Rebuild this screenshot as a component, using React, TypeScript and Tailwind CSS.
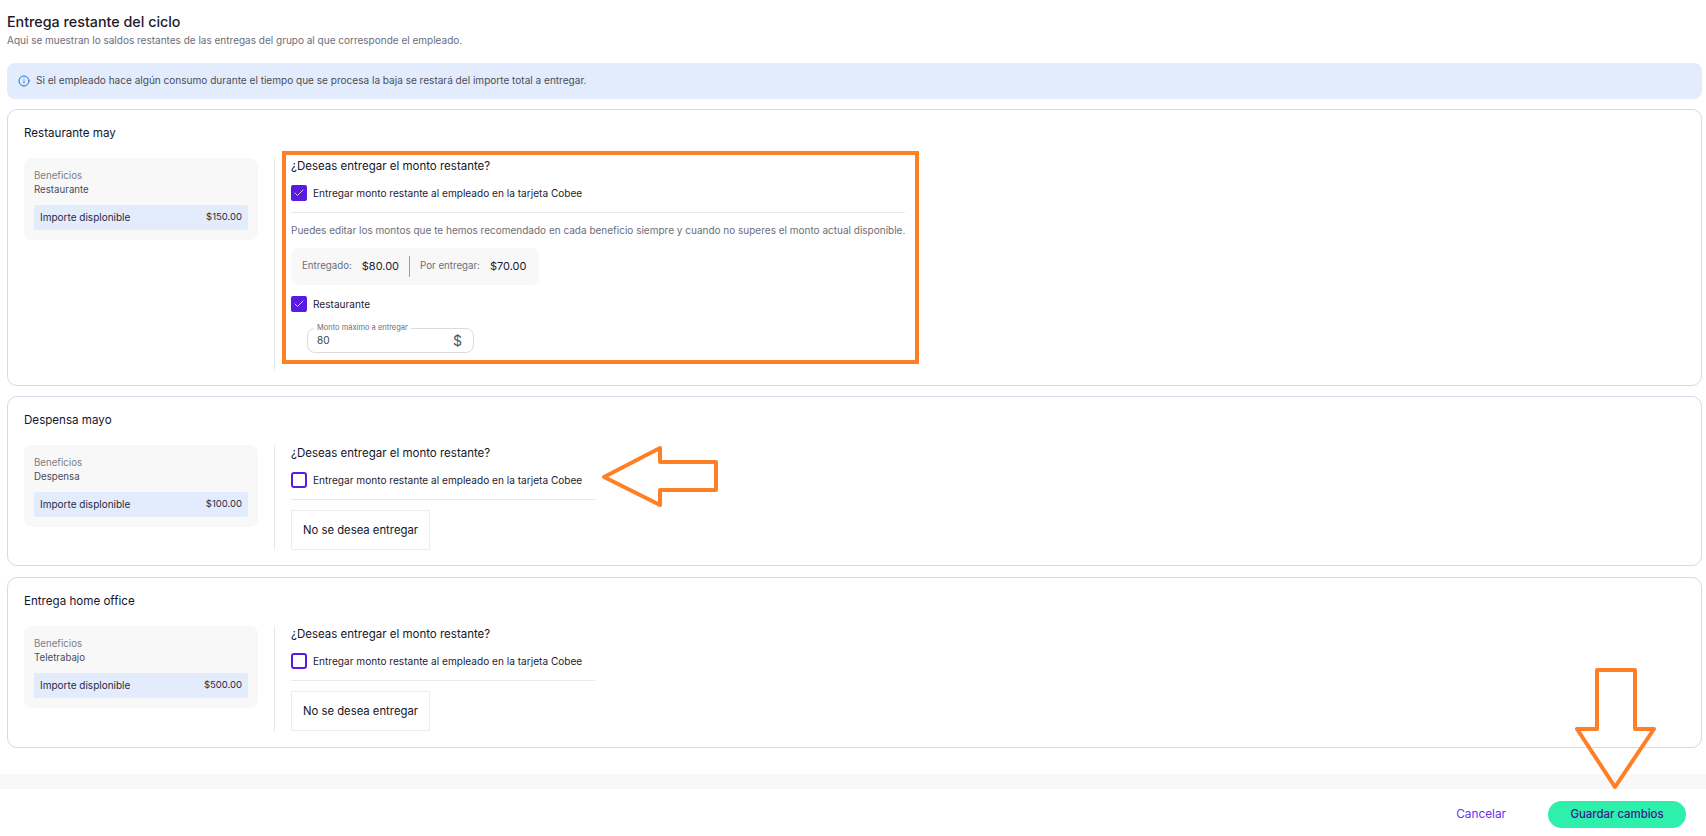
import React, { FC } from 'react';
import { Check, Info } from 'lucide-react';

const font = "font-['Inter','Liberation_Sans',sans-serif]";

const CheckBox: FC<{ checked?: boolean }> = ({ checked }) =>
  checked ? (
    <span className="flex h-4 w-4 shrink-0 items-center justify-center rounded-[2px] bg-[#5a1be0]">
      <Check className="h-3 w-3 text-white" strokeWidth={1.5} />
    </span>
  ) : (
    <span className="h-4 w-4 shrink-0 rounded-[3px] border-2 border-[#5a1be0] bg-white" />
  );

const CheckRow: FC<{ checked?: boolean; label: string }> = ({ checked, label }) => (
  <div className="flex items-center gap-[6px]">
    <CheckBox checked={checked} />
    <span className="text-[10.1px] leading-4 text-[#1f2233]">{label}</span>
  </div>
);

const Summary: FC<{ benefit: string; amount: string }> = ({ benefit, amount }) => (
  <div className="h-fit w-[234px] shrink-0 rounded-lg bg-[#f8f8f8] px-[10px] pt-[11px] pb-[10px]">
    <p className="text-[9.7px] leading-[14px] text-[#7c7f8a]">Beneficios</p>
    <p className="text-[9.7px] leading-[14px] text-[#4a4d5a]">{benefit}</p>
    <div className="mt-2 flex h-[25px] items-center justify-between rounded-[2px] bg-[#e3ecfc] px-[6px]">
      <span className="text-[10px] text-[#1f2a44]">Importe displonible</span>
      <span className="text-[9.5px] text-[#1f2a44]">{amount}</span>
    </div>
  </div>
);

const Question: FC<{ checked?: boolean }> = ({ checked }) => (
  <>
    <p className="text-[11.5px] leading-4 text-[#14162a]">¿Deseas entregar el monto restante?</p>
    <div className="mt-[11px]">
      <CheckRow checked={checked} label="Entregar monto restante al empleado en la tarjeta Cobee" />
    </div>
    <div className="mt-[11px] h-px bg-[#e8e9ed]" />
  </>
);

const Card: FC<{ title: string; benefit: string; amount: string; className?: string; children: React.ReactNode }> = ({
  title,
  benefit,
  amount,
  className,
  children,
}) => (
  <section className={`rounded-[10px] border border-[#d3dbe6] bg-white px-4 pt-[15px] pb-[15px] ${className ?? ''}`}>
    <h3 className="text-[11.6px] leading-4 font-normal text-[#14162a]">{title}</h3>
    <div className="mt-[17px] flex">
      <Summary benefit={benefit} amount={amount} />
      <div className="ml-4 w-px bg-[#e8e9ed]" />
      <div className="pl-4">{children}</div>
    </div>
  </section>
);

const NoDelivery: FC = () => (
  <div className="w-[304px]">
    <Question />
    <div className="mt-[10px] flex h-10 w-[139px] items-center justify-center border border-[#ececef] text-[11.3px] text-[#14162a]">
      No se desea entregar
    </div>
  </div>
);

const Stat: FC<{ label: string; value: string }> = ({ label, value }) => (
  <div className="flex items-center gap-[10px]">
    <span className="text-[9.7px] text-[#6b6e7a]">{label}</span>
    <span className="text-[11px] text-[#1f2233]">{value}</span>
  </div>
);

export default function App() {
  return (
    <div className={`relative flex h-[836px] flex-col overflow-hidden bg-white ${font}`}>
      <div className="pt-3 pr-1 pl-[7px]">
        <h1 className="text-[14.3px] leading-5 font-medium text-[#1a1a2a]">Entrega restante del ciclo</h1>
        <p className="text-[10px] leading-4 text-[#6b6e7a]">
          Aqui se muestran lo saldos restantes de las entregas del grupo al que corresponde el empleado.
        </p>

        <div className="mt-[15px] flex h-9 items-center gap-[6px] rounded-lg bg-[#e3ecfc] pl-[11px]">
          <Info className="h-3 w-3 text-[#1d6fe0]" />
          <span className="text-[10.05px] text-[#4a4d5a]">
            Si el empleado hace algún consumo durante el tiempo que se procesa la baja se restará del importe total a
            entregar.
          </span>
        </div>

        <Card className="mt-[10px]" title="Restaurante may" benefit="Restaurante" amount="$150.00">
          <div className="w-fit pb-px">
            <Question checked />
            <p className="mt-[10px] text-[10px] leading-[14px] text-[#6b6e7a]">
              Puedes editar los montos que te hemos recomendado en cada beneficio siempre y cuando no superes el monto
              actual disponible.
            </p>
            <div className="mt-[11px] flex h-[37px] w-[248px] items-center rounded-lg bg-[#f8f8f8] px-[11px]">
              <Stat label="Entregado:" value="$80.00" />
              <div className="mx-[10px] h-[21px] w-px bg-[#9a9ca6]" />
              <Stat label="Por entregar:" value="$70.00" />
            </div>
            <div className="mt-[11px]">
              <CheckRow checked label="Restaurante" />
            </div>
            <div className="relative mt-4 mb-4 ml-4 flex h-[25px] w-[167px] items-center justify-between rounded-lg border border-[#d9dbe0] pr-[11px] pl-[9px]">
              <span className="absolute -top-[6px] left-[6px] bg-white px-[3px] text-[7.5px] leading-[10px] text-[#6b6e7a]">
                Monto máximo a entregar
              </span>
              <span className="text-[10px] text-[#3a3d4a]">80</span>
              <span className="text-[14px] text-[#4a5568]">$</span>
            </div>
          </div>
        </Card>

        <Card className="mt-[10px]" title="Despensa mayo" benefit="Despensa" amount="$100.00">
          <NoDelivery />
        </Card>

        <Card className="mt-[11px]" title="Entrega home office" benefit="Teletrabajo" amount="$500.00">
          <div className="pb-px">
            <NoDelivery />
          </div>
        </Card>
      </div>

      <div className="mt-[26px] h-[15px] bg-[#f8f8f8]" />

      <footer className="flex items-start justify-end pt-3 pr-5">
        <button className="mr-[42px] h-[27px] text-[11.8px] text-[#6a2ff0]">Cancelar</button>
        <button className="h-[27px] w-[138px] rounded-full bg-[#2ef0ad] text-[11.4px] font-medium text-[#3a1a8c]">
          Guardar cambios
        </button>
      </footer>

      {/* hand drawn annotations on top of the capture */}
      <div className="absolute top-[151px] left-[282px] h-[213px] w-[637px] border-[4px] border-[#ff7f27]" />
      <svg className="pointer-events-none absolute top-0 left-0" width="1706" height="836" fill="none">
        <path
          d="M604 477 L660 448 L660 462 L716 462 L716 490 L660 490 L660 505 Z"
          stroke="#ff7f27"
          strokeWidth="4"
          strokeLinejoin="round"
        />
        <path
          d="M1597 670 L1635 670 L1635 729 L1654 729 L1615 787 L1577 729 L1597 729 Z"
          stroke="#ff7f27"
          strokeWidth="4"
          strokeLinejoin="round"
        />
      </svg>
    </div>
  );
}
